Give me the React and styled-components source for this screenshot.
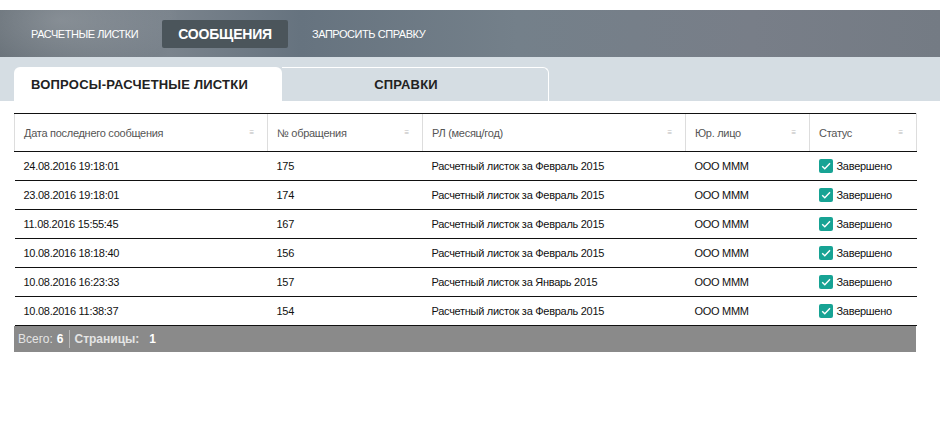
import React from 'react'
import styled, { createGlobalStyle } from 'styled-components'

const Global = createGlobalStyle`
  html, body { margin: 0; padding: 0; background: #fff; }
  body { font-family: "Liberation Sans", Arial, sans-serif; }
`

const Page = styled.div`
  width: 940px;
  height: 434px;
  padding-top: 10px;
  box-sizing: border-box;
`

const NavBar = styled.div`
  height: 47px;
  display: flex;
  align-items: center;
  padding-left: 17px;
  background:
    radial-gradient(ellipse 120px 60px at 60px 10px, rgba(255,255,255,0.18), transparent),
    linear-gradient(90deg, #656e76 0%, #7a838c 18%, #66737f 32%, #74808a 55%, #787e88 80%, #747b84 100%);
`

const NavItem = styled.div`
  color: #fff;
  font-size: ${p => (p.active ? '14px' : '11px')};
  font-weight: ${p => (p.active ? 700 : 400)};
  letter-spacing: ${p => (p.active ? '-0.2px' : '-0.45px')};
  text-transform: uppercase;
  height: 28px;
  display: flex;
  align-items: center;
  border-radius: 2px;
  background: ${p => (p.active ? '#4b555b' : 'transparent')};
  padding: ${p => (p.active ? '0 16px' : '0 14px')};
  margin-right: 10px;
`

const TabBand = styled.div`
  height: 44px;
  background: #d5dde3;
  display: flex;
  align-items: flex-end;
  padding-left: 14px;
`

const Tab = styled.div`
  width: ${p => p.w}px;
  height: 34px;
  box-sizing: border-box;
  display: flex;
  align-items: center;
  justify-content: ${p => (p.active ? 'flex-start' : 'center')};
  padding-left: ${p => (p.active ? '17px' : '0')};
  padding-right: ${p => (p.active ? '0' : '18px')};
  font-size: 13px;
  font-weight: 700;
  letter-spacing: 0.2px;
  text-transform: uppercase;
  color: #222;
  background: ${p => (p.active ? '#fff' : 'transparent')};
  border-radius: 6px 6px 0 0;
  border-top: ${p => (p.active ? 'none' : '1px solid #fff')};
  border-right: ${p => (p.active ? 'none' : '1px solid #fff')};
  border-top-left-radius: ${p => (p.active ? '6px' : '0')};
`

const TableWrap = styled.div`
  margin: 12px 24px 0 14px;
`

const Table = styled.table`
  width: 902px;
  border-collapse: collapse;
  table-layout: fixed;
  font-size: 11px;
  letter-spacing: -0.28px;
`

const Th = styled.th`
  height: 37px;
  text-align: left;
  font-weight: 400;
  color: #555;
  padding: 0 9px;
  border-top: 1px solid #111;
  border-bottom: 1px solid #111;
  border-left: 1px solid #ddd;
  position: relative;
  &:last-child { border-right: 1px solid #ddd; }
`

const Sort = styled.span`
  position: absolute;
  right: 13px;
  top: 50%;
  transform: translateY(-50%);
  color: #bbb;
  font-size: 8px;
  line-height: 1;
`

const Td = styled.td`
  height: 28px;
  padding: 0 9px;
  color: #111;
  border-bottom: 1px solid #111;
  white-space: nowrap;
`

const Status = styled.div`
  display: flex;
  align-items: center;
  gap: 4px;
`

const Check = styled.span`
  width: 14px;
  height: 14px;
  border-radius: 2px;
  background: #17a394;
  display: inline-flex;
  align-items: center;
  justify-content: center;
`

const Footer = styled.div`
  height: 26px;
  background: #8a8a8a;
  display: flex;
  align-items: center;
  padding-left: 4px;
  color: #e4e4e4;
  font-size: 12px;
`

const FootPart = styled.div`
  display: flex;
  align-items: center;
  height: 18px;
  padding: 0 5px 0 ${p => (p.first ? '0' : '5px')};
  border-right: ${p => (p.first ? '1px solid #b8b8b8' : 'none')};
  font-weight: ${p => (p.first ? 400 : 700)};
  b { color: #fff; margin-left: ${p => (p.first ? '4px' : '10px')}; }
`

const cols = [
  { title: 'Дата последнего сообщения', w: 253 },
  { title: '№ обращения', w: 155 },
  { title: 'РЛ (месяц/год)', w: 263 },
  { title: 'Юр. лицо', w: 124 },
  { title: 'Статус', w: 107 },
]

const rows = [
  ['24.08.2016 19:18:01', '175', 'Расчетный листок за Февраль 2015'],
  ['23.08.2016 19:18:01', '174', 'Расчетный листок за Февраль 2015'],
  ['11.08.2016 15:55:45', '167', 'Расчетный листок за Февраль 2015'],
  ['10.08.2016 18:18:40', '156', 'Расчетный листок за Февраль 2015'],
  ['10.08.2016 16:23:33', '157', 'Расчетный листок за Январь 2015'],
  ['10.08.2016 11:38:37', '154', 'Расчетный листок за Февраль 2015'],
]

export default function App() {
  return (
    <Page>
      <Global />
      <NavBar>
        <NavItem>Расчетные листки</NavItem>
        <NavItem active>Сообщения</NavItem>
        <NavItem>Запросить справку</NavItem>
      </NavBar>
      <TabBand>
        <Tab active w={268}>Вопросы-расчетные листки</Tab>
        <Tab w={267}>Справки</Tab>
      </TabBand>
      <TableWrap>
        <Table>
          <colgroup>
            {cols.map(c => <col key={c.title} style={{ width: c.w }} />)}
          </colgroup>
          <thead>
            <tr>
              {cols.map(c => (
                <Th key={c.title}>{c.title}<Sort>≡</Sort></Th>
              ))}
            </tr>
          </thead>
          <tbody>
            {rows.map((r, i) => (
              <tr key={i}>
                <Td>{r[0]}</Td>
                <Td>{r[1]}</Td>
                <Td>{r[2]}</Td>
                <Td>ООО МММ</Td>
                <Td>
                  <Status>
                    <Check>
                      <svg width="12" height="12" viewBox="0 0 12 12">
                        <path d="M2.2 6.2 L4.8 8.8 L10 3.2" fill="none" stroke="#fff" strokeWidth="1.4" />
                      </svg>
                    </Check>
                    Завершено
                  </Status>
                </Td>
              </tr>
            ))}
          </tbody>
        </Table>
        <Footer>
          <FootPart first>Всего:<b>6</b></FootPart>
          <FootPart>Страницы:<b>1</b></FootPart>
        </Footer>
      </TableWrap>
    </Page>
  )
}
